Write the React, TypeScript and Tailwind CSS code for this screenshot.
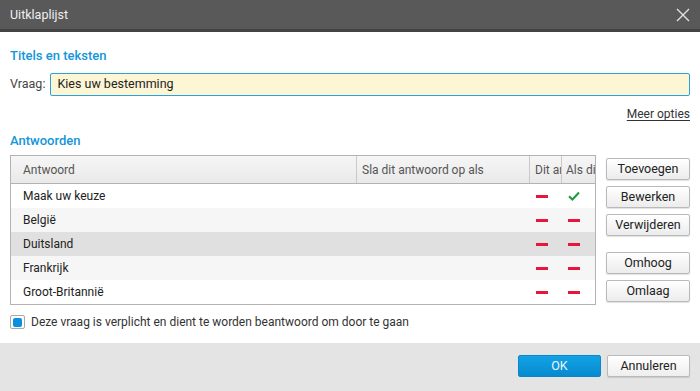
import React from 'react'

const rows = [
  { name: 'Maak uw keuze', dit: false, als: true, bg: 'bg-white' },
  { name: 'België', dit: false, als: false, bg: 'bg-[#f6f6f6]' },
  { name: 'Duitsland', dit: false, als: false, bg: 'bg-[#e0e0e0]' },
  { name: 'Frankrijk', dit: false, als: false, bg: 'bg-[#f6f6f6]' },
  { name: 'Groot-Britannië', dit: false, als: false, bg: 'bg-white' },
]

const Dash = () => <div className="w-[12px] h-[3px] bg-[#e5173d]" />

const Check = () => (
  <svg width="12" height="10" viewBox="0 0 12 10" className="block">
    <path d="M1 5.2 L4.4 8.5 L11 1.5" fill="none" stroke="#1f9a3c" strokeWidth="2" />
  </svg>
)

const SideButton = ({ label, className = '' }: { label: string; className?: string }) => (
  <button className={`h-[22px] w-[84px] rounded-[2px] border border-[#b9b9b9] bg-gradient-to-b from-white to-[#ececec] text-[12.5px] text-[#222] leading-none shadow-[0_1px_1px_rgba(0,0,0,0.12)] ${className}`}>
    {label}
  </button>
)

export default function App() {
  return (
    <div className="w-[700px] h-[391px] flex flex-col bg-white text-[12px] text-[#222]" style={{ fontFamily: 'Roboto, "Noto Sans", sans-serif' }}>
      {/* title bar */}
      <div className="h-[32px] flex items-center justify-between bg-[#595959] border-b-[3px] border-[#444] pl-[10px] pr-[10px]">
        <span className="text-[12.5px] text-[#f0f0f0] leading-4">Uitklaplijst</span>
        <svg width="14" height="14" viewBox="0 0 14 14" className="mt-[1px]">
          <path d="M1 1 L13 13 M13 1 L1 13" stroke="#e2e2e2" strokeWidth="1.4" />
        </svg>
      </div>

      <div className="h-[311px] px-[10px] pt-[16px] flex flex-col">
        <div className="h-4 leading-4 text-[13px] font-medium text-[#1296db]">Titels en teksten</div>

        <div className="mt-[9px] flex items-center gap-[5px]">
          <span className="text-[12.5px] text-[#444]">Vraag:</span>
          <div className="flex-1 h-[23px] flex items-center border border-[#2aa2dc] rounded-[2px] bg-[#fdf6d5] pl-[6px] text-[12.5px]">
            Kies uw bestemming
          </div>
        </div>

        <div className="mt-[10px] h-4 leading-4 flex justify-end">
          <span className="underline text-[#333] underline-offset-2">Meer opties</span>
        </div>

        <div className="mt-[11px] h-4 leading-4 text-[13px] font-medium text-[#1296db]">Antwoorden</div>

        <div className="mt-[6px] flex gap-[10px]">
          <div className="w-[586px] border border-[#b3b3b3]">
            <div className="grid grid-cols-[346px_173px_32px_1fr] h-[28px] bg-gradient-to-b from-[#f6f6f6] to-[#e9e9e9] border-b border-[#b3b3b3] text-[#555]">
              <div className="flex items-center pl-[12px] border-r border-[#c9c9c9]">Antwoord</div>
              <div className="flex items-center pl-[5px] border-r border-[#c9c9c9] overflow-hidden whitespace-nowrap">Sla dit antwoord op als</div>
              <div className="flex items-center pl-[5px] border-r border-[#c9c9c9] overflow-hidden whitespace-nowrap">Dit antwoord</div>
              <div className="flex items-center pl-[4px] overflow-hidden whitespace-nowrap">Als dit</div>
            </div>
            {rows.map((r) => (
              <div key={r.name} className={`grid grid-cols-[346px_173px_32px_1fr] h-[24px] ${r.bg}`}>
                <div className="flex items-center pl-[12px]">{r.name}</div>
                <div />
                <div className="flex items-center pl-[6px]">{r.dit ? <Check /> : <Dash />}</div>
                <div className="flex items-center pl-[6px]">{r.als ? <Check /> : <Dash />}</div>
              </div>
            ))}
          </div>

          <div className="mt-[3px] flex flex-col gap-[6px]">
            <SideButton label="Toevoegen" />
            <SideButton label="Bewerken" />
            <SideButton label="Verwijderen" />
            <SideButton label="Omhoog" className="mt-[10px]" />
            <SideButton label="Omlaag" />
          </div>
        </div>

        <div className="mt-[8px] flex items-center gap-[6px]">
          <div className="w-[15px] h-[14px] rounded-[2px] border border-[#a9a9a9] bg-white flex items-center justify-center">
            <div className="w-[9px] h-[9px] rounded-[2px] bg-[#0b8fde]" />
          </div>
          <span className="text-[#333]">Deze vraag is verplicht en dient te worden beantwoord om door te gaan</span>
        </div>
      </div>

      <div className="h-[48px] bg-[#e4e4e4] flex justify-end items-start pt-[12px] pr-[10px] gap-[6px]">
        <button className="h-[22px] w-[83px] rounded-[2px] border border-[#0a86c9] bg-gradient-to-b from-[#12a2e6] to-[#078acf] text-[12.5px] text-[#eaf6fd] leading-none">
          OK
        </button>
        <button className="h-[22px] w-[83px] rounded-[2px] border border-[#b9b9b9] bg-gradient-to-b from-white to-[#eeeeee] text-[12.5px] text-[#222] leading-none shadow-[0_1px_1px_rgba(0,0,0,0.12)]">
          Annuleren
        </button>
      </div>
    </div>
  )
}
